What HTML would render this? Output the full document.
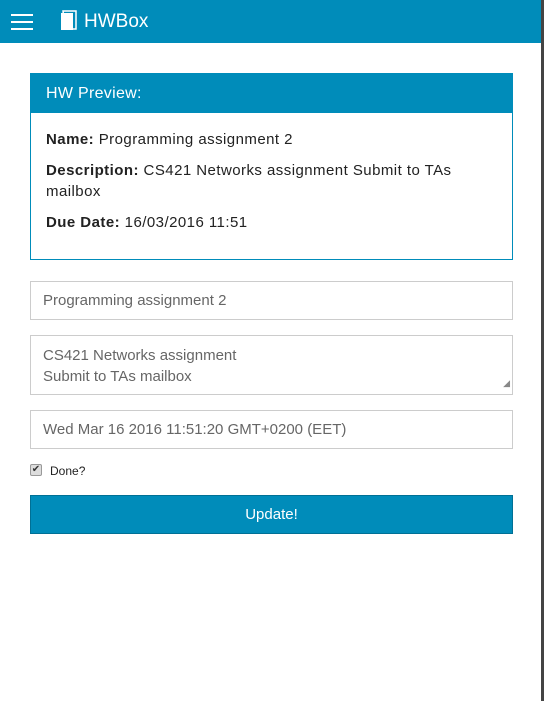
<!DOCTYPE html>
<html><head><style>
*{box-sizing:border-box;margin:0;padding:0}
body{width:544px;height:701px;background:#fff;font-family:"Liberation Sans",sans-serif;position:relative;overflow:hidden;color:#222}
.edge{position:absolute;right:0;top:0;width:3px;height:701px;background:#444}
.hdr{position:absolute;left:0;top:0;width:541px;height:43px;background:#008cba}
.burger{position:absolute;left:11px;top:14px;width:22px}
.burger i{display:block;height:2px;background:#fff;margin-bottom:5px}
.title{position:absolute;left:84px;top:11px;color:#fff;font-size:19px}
.panel{position:absolute;left:30px;top:73px;width:483px;height:187px;border:1px solid #008cba}
.ph{height:39px;background:#008cba;color:#fff;font-size:16px;padding:11px 15px;letter-spacing:.3px}
.pb{padding:16px 15px;font-size:15px;line-height:21px;letter-spacing:.45px}
.pb p{margin-bottom:10px}
.in{position:absolute;left:30px;width:483px;border:1px solid #ccc;font-size:15px;color:#666;padding:0 12px}
.cb{position:absolute;left:30px;top:464px;width:12px;height:12px;border:1px solid #999;border-radius:2px;background:#ddd;font-size:10px;line-height:10px;text-align:center;color:#333}
.btn{position:absolute;left:30px;top:495px;width:483px;height:39px;background:#008cba;border:1px solid #007095;color:#fff;font-size:15px;text-align:center;line-height:38px}
</style></head><body>
<div class="hdr">
<div class="burger"><i></i><i></i><i></i></div>
<svg style="position:absolute;left:60px;top:10px" width="18" height="21" viewBox="0 0 18 21"><path d="M3 1h13v18H5z" fill="none" stroke="#fff" stroke-width="1.5"/><rect x="1" y="3" width="12" height="17" fill="#fff"/></svg>
<div class="title">HWBox</div>
</div>
<div class="edge"></div>
<div class="panel"><div class="ph">HW Preview:</div>
<div class="pb"><p><b>Name:</b> Programming assignment 2</p><p><b>Description:</b> CS421 Networks assignment Submit to TAs mailbox</p><p><b>Due Date:</b> 16/03/2016 11:51</p></div></div>
<div class="in" style="top:281px;height:39px;line-height:38px">Programming assignment 2</div>
<div class="in" style="top:335px;height:60px;padding-top:9px;line-height:21px">CS421 Networks assignment<br>Submit to TAs mailbox<span style="position:absolute;right:2px;bottom:0;font-size:9px;color:#888">◢</span></div>
<div class="in" style="top:410px;height:39px;line-height:38px">Wed Mar 16 2016 11:51:20 GMT+0200 (EET)</div>
<div class="cb">✔</div>
<div style="position:absolute;left:50px;top:464px;font-size:12px">Done?</div>
<div class="btn">Update!</div>
</body></html>
